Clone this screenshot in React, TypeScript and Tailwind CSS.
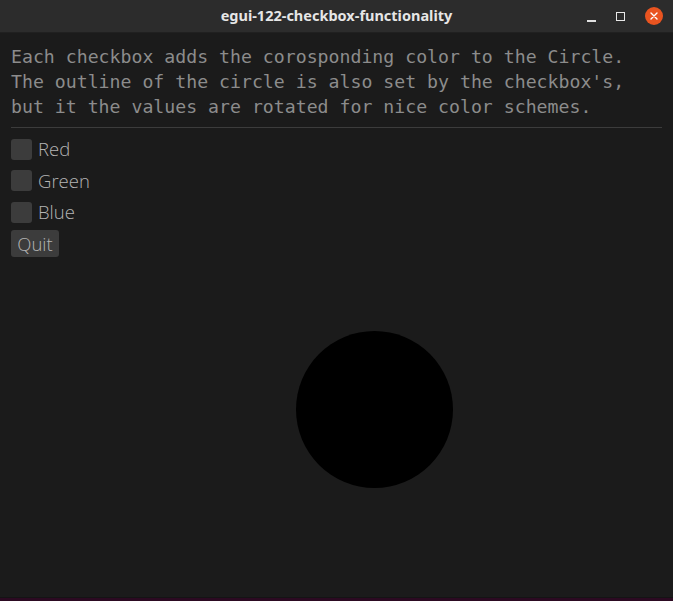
export default function App() {
  const options = ["Red", "Green", "Blue"];

  return (
    <div className="flex h-[601px] w-[673px] flex-col overflow-hidden bg-[#1b1b1b]">
      {/* window title bar */}
      <div className="relative flex h-[33px] shrink-0 items-center justify-center border-b border-[#202020] bg-[#2c2c2c]">
        <span className="font-['Noto_Sans',sans-serif] text-[14.5px] font-bold text-[#e6e6e6]">
          egui-122-checkbox-functionality
        </span>
        <div className="absolute right-[10px] top-0 flex h-full items-center gap-[20px]">
          <span className="mt-[9px] block h-[2px] w-[9px] bg-[#e0e0e0]" />
          <span className="block h-[9px] w-[9px] border-[1.5px] border-[#e8e8e8]" />
          <span className="flex h-[18px] w-[18px] items-center justify-center rounded-full bg-[#e95420]">
            <svg width="8" height="8" viewBox="0 0 8 8">
              <path d="M1 1L7 7M7 1L1 7" stroke="#fff" strokeWidth="1.4" strokeLinecap="round" />
            </svg>
          </span>
        </div>
      </div>

      {/* central panel */}
      <div className="relative flex-1 px-[11px] pt-[11px]">
        <p className="font-['DejaVu_Sans_Mono',monospace] text-[18.2px] leading-[25px] whitespace-pre text-[#8c8c8c]">
          {"Each checkbox adds the corosponding color to the Circle.\nThe outline of the circle is also set by the checkbox's,\nbut it the values are rotated for nice color schemes."}
        </p>
        <div className="mt-[7.7px] h-px bg-[#3c3c3c]" />
        <div className="mt-[8px] flex flex-col gap-[4.5px]">
          {options.map((name) => (
            <label key={name} className="flex h-[27px] items-center gap-[6px]">
              <span className="block h-[21px] w-[21px] rounded-[3px] bg-[#3c3c3c]" />
              <span className="font-['Open_Sans',sans-serif] text-[18.5px] font-light text-[#b4b4b4]">{name}</span>
            </label>
          ))}
          <button className="flex h-[27px] w-[48px] items-center justify-center rounded-[3px] bg-[#3c3c3c] font-['Open_Sans',sans-serif] text-[18.5px] font-light text-[#b4b4b4]">
            Quit
          </button>
        </div>

        {/* painted circle */}
        <div className="absolute left-[295.5px] top-[297.5px] h-[157px] w-[157px] rounded-full bg-black" />
      </div>

      <div className="h-px shrink-0 bg-[#141414]" />
      <div className="h-[3px] shrink-0 bg-[#2c0a22]" />
    </div>
  );
}
